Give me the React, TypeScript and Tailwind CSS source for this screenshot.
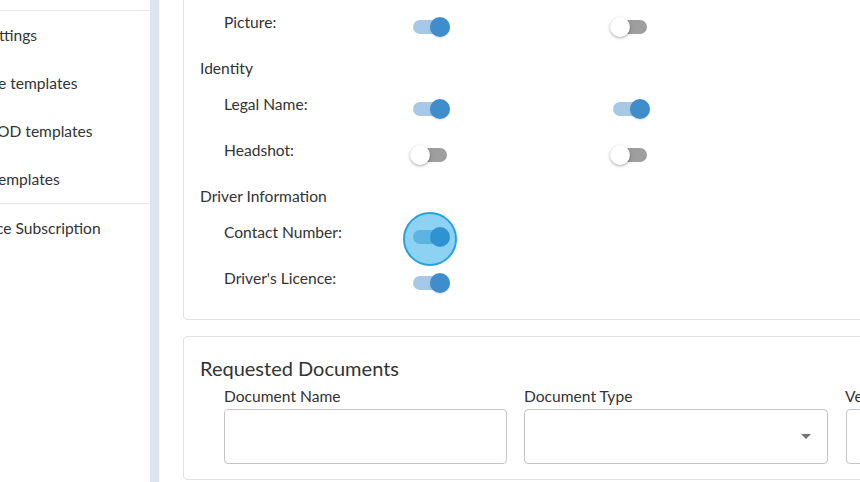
import React from "react";

function Switch({ on, focus }: { on: boolean; focus?: boolean }) {
  return (
    <div className="relative w-[40px] h-[20px] mt-[5px] shrink-0">
      {focus && (
        <div className="absolute left-[-7px] top-[-15px] w-[54px] h-[54px] rounded-full bg-[#8dd2f3] border-2 border-[#27a2de]" />
      )}
      <div
        className={
          on
            ? focus
              ? "absolute left-[3px] top-[3px] w-[34px] h-[14px] rounded-full bg-[#5cb4e3]"
              : "absolute left-[3px] top-[3px] w-[34px] h-[14px] rounded-full bg-[#a5c9e7]"
            : "absolute left-[3px] top-[3px] w-[34px] h-[14px] rounded-full bg-[#9e9e9e]"
        }
      />
      <div
        className={
          on
            ? focus
              ? "absolute top-0 left-[20px] w-[20px] h-[20px] rounded-full bg-[#2e93d3]"
              : "absolute top-0 left-[20px] w-[20px] h-[20px] rounded-full bg-[#3f8dca] shadow-[0_1px_2px_rgba(0,0,0,0.15)]"
            : "absolute top-0 left-0 w-[20px] h-[20px] rounded-full bg-white shadow-[0_1px_3px_rgba(0,0,0,0.35)]"
        }
      />
    </div>
  );
}

function Row({
  label,
  a,
  b,
  focusA,
}: {
  label: string;
  a?: boolean;
  b?: boolean;
  focusA?: boolean;
}) {
  return (
    <div className="flex h-[46px] pl-[24px]">
      <div className="w-[186px] shrink-0 text-[15.6px] leading-[20px] text-[#333]">{label}</div>
      <div className="w-[200px] shrink-0">
        {a !== undefined && <Switch on={a} focus={focusA} />}
      </div>
      <div className="w-[200px] shrink-0">{b !== undefined && <Switch on={b} />}</div>
    </div>
  );
}

function Heading({ text }: { text: string }) {
  return <div className="h-[36px] text-[15.6px] leading-[20px] text-[#333]">{text}</div>;
}

export default function App() {
  const side = [
    { t: "ttings", m: "ml-[-1px]" },
    { t: "e templates", m: "ml-[-2px]" },
    { t: "OD templates", m: "ml-[-3px]" },
    { t: "emplates", m: "ml-[-2px]" },
  ];
  return (
    <div
      className="w-[860px] h-[482px] overflow-hidden flex bg-white text-[#333]"
      style={{ fontFamily: "Lato, 'Open Sans', sans-serif" }}
    >
      <aside className="w-[150px] shrink-0 bg-white flex flex-col overflow-hidden">
        <div className="h-[11px] border-b border-[#e6e6e6] shrink-0" />
        {side.map((s) => (
          <div key={s.t} className="h-[48px] flex items-center shrink-0 whitespace-nowrap">
            <span className={`${s.m} text-[15.6px] leading-[20px]`}>{s.t}</span>
          </div>
        ))}
        <div className="h-[49px] flex items-center border-t border-[#e6e6e6] shrink-0 whitespace-nowrap">
          <span className="ml-[-4px] text-[15.6px] leading-[20px]">ce Subscription</span>
        </div>
      </aside>
      <div className="w-[9px] shrink-0 bg-[#dde6f0]" />
      <main className="flex-1 pl-[24px] overflow-hidden flex flex-col gap-[16px]">
        <section className="-mt-[10px] w-[760px] shrink-0 border border-[#e2e2e2] rounded-[4px] pt-[21px] pb-[5px] pl-[16px]">
          <Row label="Picture:" a={true} b={false} />
          <Heading text="Identity" />
          <Row label="Legal Name:" a={true} b={true} />
          <Row label="Headshot:" a={false} b={false} />
          <Heading text="Driver Information" />
          <Row label="Contact Number:" a={true} focusA />
          <Row label="Driver's Licence:" a={true} />
        </section>
        <section className="w-[760px] shrink-0 border border-[#e2e2e2] rounded-[4px] pt-[19px] pb-[15px] pl-[16px]">
          <div className="text-[20px] leading-[24px] text-[#333]">Requested Documents</div>
          <div className="flex gap-[17px] pl-[24px] mt-[6px]">
            <div className="w-[283px] shrink-0 flex flex-col">
              <div className="text-[15.6px] leading-[20px]">Document Name</div>
              <div className="mt-[3px] h-[55px] border border-[#c4c4c4] rounded-[4px] bg-white" />
            </div>
            <div className="w-[304px] shrink-0 flex flex-col">
              <div className="text-[15.6px] leading-[20px]">Document Type</div>
              <div className="mt-[3px] h-[55px] border border-[#c4c4c4] rounded-[4px] bg-white flex items-center justify-end pr-[16px]">
                <svg width="10" height="5" viewBox="0 0 10 5">
                  <path d="M0 0 L10 0 L5 5 Z" fill="#757575" />
                </svg>
              </div>
            </div>
            <div className="w-[200px] shrink-0 flex flex-col ml-[1px]">
              <div className="text-[15.6px] leading-[20px] -ml-[1px]">Verified</div>
              <div className="mt-[3px] h-[55px] border border-[#c4c4c4] rounded-[4px] bg-white" />
            </div>
          </div>
        </section>
      </main>
    </div>
  );
}
